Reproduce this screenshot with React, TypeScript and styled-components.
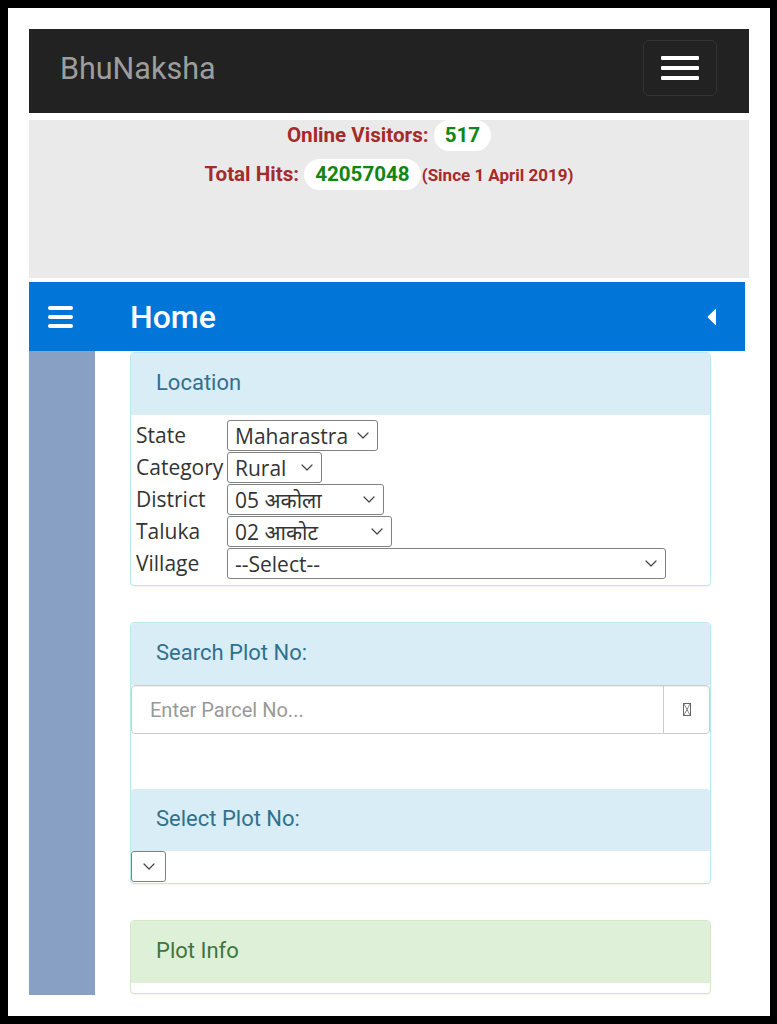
import styled, { createGlobalStyle } from "styled-components";

const GlobalStyle = createGlobalStyle`
    html, body {
        margin: 0;
        padding: 0;
        background: #000;
    }
    body {
        font-family: Roboto, "Noto Sans", "DejaVu Sans", sans-serif;
        color: #333;
    }
    * {
        box-sizing: border-box;
    }
`;

type Field = {
    label: string;
    value: string;
    width: number;
}

const fields: Field[] = [
    { label: "State", value: "Maharastra", width: 151 },
    { label: "Category", value: "Rural", width: 95 },
    { label: "District", value: "05 अकोला", width: 157 },
    { label: "Taluka", value: "02 आकोट", width: 165 },
    { label: "Village", value: "--Select--", width: 439 },
];

const Chevron = () => (
    <svg width="12" height="7" viewBox="0 0 12 7" fill="none">
        <path d="M1 1l5 5 5-5" stroke="#444" strokeWidth="1.2" strokeLinecap="round" strokeLinejoin="round" />
    </svg>
);

const App = () => {
    return (
        <>
            <GlobalStyle />
            <Frame>
                <Navbar>
                    <Brand>BhuNaksha</Brand>
                    <Toggle type="button" aria-label="Toggle navigation">
                        <ToggleBar />
                        <ToggleBar />
                        <ToggleBar />
                    </Toggle>
                </Navbar>

                <Stats>
                    <StatLine>
                        Online Visitors: <Pill>517</Pill>
                    </StatLine>
                    <StatLine>
                        Total Hits: <Pill>42057048</Pill>
                        <Since>(Since 1 April 2019)</Since>
                    </StatLine>
                </Stats>

                <TitleBar>
                    <svg width="25" height="22" viewBox="0 0 25 22">
                        <rect x="0" y="0" width="25" height="4" rx="2" fill="#fff" />
                        <rect x="0" y="9" width="25" height="4" rx="2" fill="#fff" />
                        <rect x="0" y="18" width="25" height="4" rx="2" fill="#fff" />
                    </svg>
                    <Title>Home</Title>
                    <svg width="10" height="18" viewBox="0 0 10 18">
                        <path d="M9 0.5 L9 17.5 L0.8 9.6 Q0.3 9 0.8 8.4 Z" fill="#fff" />
                    </svg>
                </TitleBar>

                <Main>
                    <Sidebar />
                    <Content>
                        <Panel $tone="info">
                            <PanelHeading $tone="info">Location</PanelHeading>
                            <FormBody>
                                {fields.map((f) => (
                                    <FormRow key={f.label}>
                                        <Label>{f.label}</Label>
                                        <SelectBox style={{ width: f.width }}>
                                            <span>{f.value}</span>
                                            <Chevron />
                                        </SelectBox>
                                    </FormRow>
                                ))}
                            </FormBody>
                        </Panel>

                        <Panel $tone="info">
                            <PanelHeading $tone="info">Search Plot No:</PanelHeading>
                            <InputGroup>
                                <ParcelInput placeholder="Enter Parcel No..." />
                                <Addon>
                                    <svg width="8" height="13" viewBox="0 0 8 13" fill="none">
                                        <rect x="0.5" y="0.5" width="7" height="12" stroke="#666" />
                                        <path d="M1 1l6 11M7 1L1 12" stroke="#666" strokeWidth="0.8" />
                                    </svg>
                                </Addon>
                            </InputGroup>
                            <Spacer />
                            <PanelHeading $tone="info">Select Plot No:</PanelHeading>
                            <PlotSelectRow>
                                <SelectBox style={{ width: 35, justifyContent: "center", padding: 0 }}>
                                    <Chevron />
                                </SelectBox>
                            </PlotSelectRow>
                        </Panel>

                        <Panel $tone="success">
                            <PanelHeading $tone="success">Plot Info</PanelHeading>
                            <InfoBody />
                        </Panel>
                    </Content>
                </Main>
            </Frame>
        </>
    );
};

const tones = {
    info: { bg: "#d9edf7", border: "#bce8f1", text: "#31708f" },
    success: { bg: "#dff0d8", border: "#d6e9c6", text: "#3c763d" },
};

type Tone = keyof typeof tones;

const Frame = styled.div`
    margin: 8px 7px 8px 8px;
    height: 1008px;
    padding: 21px 21px 0;
    background: #fff;
    overflow: hidden;
`;

const Navbar = styled.nav`
    display: flex;
    align-items: center;
    justify-content: space-between;
    height: 84px;
    padding: 0 32px 6px 31px;
    margin-bottom: 7px;
    background: #222;
`;

const Brand = styled.div`
    font-size: 30.5px;
    color: #9d9d9d;
`;

const Toggle = styled.button`
    display: flex;
    flex-direction: column;
    align-items: center;
    justify-content: center;
    gap: 6px;
    width: 74px;
    height: 56px;
    padding: 0;
    background: transparent;
    border: 1px solid #333;
    border-radius: 6px;
`;

const ToggleBar = styled.span`
    display: block;
    width: 38px;
    height: 4px;
    border-radius: 1px;
    background: #fff;
`;

const Stats = styled.div`
    height: 158px;
    margin-bottom: 4px;
    background: #eaeaea;
    text-align: center;
    font-weight: bold;
    color: #a52a2a;
`;

const StatLine = styled.div`
    font-size: 20.6px;
    line-height: 31px;
    margin-bottom: 8px;
`;

const Pill = styled.span`
    display: inline-block;
    padding: 0 11px;
    line-height: 31px;
    border-radius: 16px;
    background: #fff;
    color: #128512;
`;

const Since = styled.span`
    font-size: 17px;
    margin-left: 1px;
`;

const TitleBar = styled.div`
    display: flex;
    align-items: center;
    width: 716px;
    height: 69px;
    padding: 0 28px 0 19px;
    background: #0275d8;
`;

const Title = styled.h3`
    flex: 1;
    margin: 0 0 0 57px;
    font-size: 32px;
    font-weight: 500;
    color: #fff;
`;

const Main = styled.div`
    display: flex;
    width: 716px;
`;

const Sidebar = styled.aside`
    width: 66px;
    height: 644px;
    background: #87a0c4;
`;

const Content = styled.div`
    flex: 1;
    display: flex;
    flex-direction: column;
    gap: 36px;
    padding: 1px 34px 0 35px;
`;

const Panel = styled.section<{ $tone: Tone }>`
    border: 1px solid ${(p) => tones[p.$tone].border};
    border-radius: 4px;
    background: #fff;
    box-shadow: 0 1px 1px rgba(0, 0, 0, 0.05);
    overflow: hidden;
`;

const PanelHeading = styled.div<{ $tone: Tone }>`
    display: flex;
    align-items: center;
    height: 62px;
    padding: 0 25px 3px;
    border-radius: 3px 3px 0 0;
    background: ${(p) => tones[p.$tone].bg};
    color: ${(p) => tones[p.$tone].text};
    font-size: 22px;
`;

const FormBody = styled.div`
    padding: 5px 5px 5px;
    font-family: "Open Sans", "Noto Sans", sans-serif;
`;

const FormRow = styled.div`
    display: flex;
    align-items: flex-start;
    height: 32px;
`;

const Label = styled.span`
    width: 91px;
    font-size: 21px;
    line-height: 31px;
    color: #333;
    white-space: nowrap;
`;

const SelectBox = styled.div`
    display: inline-flex;
    align-items: center;
    justify-content: space-between;
    height: 31px;
    padding: 0 8px 0 7px;
    border: 1px solid #808080;
    border-radius: 3px;
    background: #fff;
    font-family: "Open Sans", "Noto Sans", sans-serif;
    font-size: 21px;
    color: #333;
    white-space: nowrap;
`;

const InputGroup = styled.div`
    display: flex;
    height: 49px;
    border: 1px solid #ccc;
    border-radius: 4px;
    box-shadow: inset 0 1px 1px rgba(0, 0, 0, 0.075);
`;

const ParcelInput = styled.input`
    flex: 1;
    min-width: 0;
    border: none;
    outline: none;
    background: transparent;
    padding: 0 18px;
    font-family: Roboto, sans-serif;
    font-size: 20px;
    color: #555;

    &::placeholder {
        color: #999;
    }
`;

const Addon = styled.div`
    display: flex;
    align-items: center;
    justify-content: center;
    width: 46px;
    border-left: 1px solid #ccc;
`;

const Spacer = styled.div`
    height: 55px;
`;

const PlotSelectRow = styled.div`
    height: 32px;
`;

const InfoBody = styled.div`
    height: 10px;
`;

export default App;
